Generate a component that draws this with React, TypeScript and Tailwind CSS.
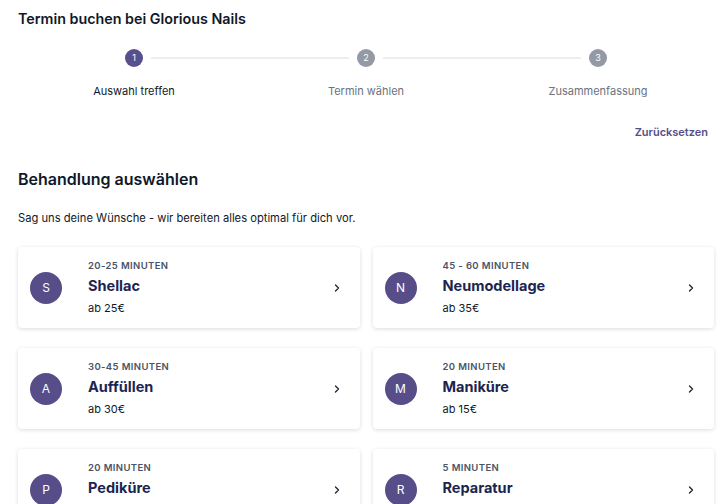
import React from 'react';

const steps = [
    { n: 1, label: 'Auswahl treffen', active: true },
    { n: 2, label: 'Termin wählen', active: false },
    { n: 3, label: 'Zusammenfassung', active: false },
];

const services = [
    { letter: 'S', duration: '20-25 Minuten', name: 'Shellac', price: 'ab 25€' },
    { letter: 'N', duration: '45 - 60 Minuten', name: 'Neumodellage', price: 'ab 35€' },
    { letter: 'A', duration: '30-45 Minuten', name: 'Auffüllen', price: 'ab 30€' },
    { letter: 'M', duration: '20 Minuten', name: 'Maniküre', price: 'ab 15€' },
    { letter: 'P', duration: '20 Minuten', name: 'Pediküre', price: 'ab 20€' },
    { letter: 'R', duration: '5 Minuten', name: 'Reparatur', price: 'ab 5€' },
];

const Chevron = () => (
    <svg width="10" height="10" viewBox="0 0 10 10" fill="none" stroke="#1f2937" strokeWidth="1.4" strokeLinecap="round" strokeLinejoin="round">
        <path d="M3.5 2 L6.5 5 L3.5 8" />
    </svg>
);

const Stepper = () => (
    <div className="grid grid-cols-3 mt-[21px]">
        {steps.map((s, i) => (
            <div key={s.n} className="relative flex flex-col items-center">
                {i < steps.length - 1 && (
                    <div className="absolute top-[8px] left-[calc(50%+17px)] w-[calc(100%-34px)] h-[2px] bg-[#eceef1]"></div>
                )}
                <div className={`w-[18px] h-[18px] rounded-full flex items-center justify-center text-white text-[9px] ${s.active ? 'bg-[#584f8e]' : 'bg-[#939aa6]'}`}>
                    {s.n}
                </div>
                <p className={`mt-[17px] text-[11px] leading-[14px] ${s.active ? 'text-[#111827]' : 'text-[#6b7280]'}`}>{s.label}</p>
            </div>
        ))}
    </div>
);

const ServiceCard = ({ letter, duration, name, price }: any) => (
    <div className="bg-white rounded-[4px] shadow-[0_1px_4px_rgba(0,0,0,0.14)] h-[81px] flex items-center pl-[12px] pr-[18px]">
        <div className="w-[32px] h-[32px] rounded-full bg-[#574e89] flex items-center justify-center text-white text-[12px] shrink-0">
            {letter}
        </div>
        <div className="ml-[26px] flex-1 flex flex-col">
            <p className="text-[9.5px] font-semibold uppercase tracking-[0.04em] text-[#4a5468] leading-[12px]">{duration}</p>
            <p className="mt-[5px] text-[14.5px] font-bold text-[#1b2550] leading-[18px]">{name}</p>
            <p className="mt-[6px] text-[11px] text-[#111827] leading-[14px]">{price}</p>
        </div>
        <Chevron />
    </div>
);

export default function App() {
    return (
        <div className="w-[727px] h-[504px] overflow-hidden bg-white pl-[18px] pr-[13px] pt-[10px]" style={{ fontFamily: 'Inter, "Noto Sans", sans-serif' }}>
            <h1 className="text-[14.3px] font-semibold text-[#111827] leading-[18px]">Termin buchen bei Glorious Nails</h1>
            <Stepper />
            <div className="flex justify-end mt-[27px] pr-[6px]">
                <button className="text-[11px] font-semibold text-[#574e89] leading-[14px]">Zurücksetzen</button>
            </div>
            <h2 className="mt-[30px] text-[16px] font-semibold text-[#111827] leading-[20px]">Behandlung auswählen</h2>
            <p className="mt-[22px] text-[11.2px] text-[#111827] leading-[14px]">Sag uns deine Wünsche - wir bereiten alles optimal für dich vor.</p>
            <div className="mt-[22px] grid grid-cols-2 gap-x-[13px] gap-y-[20px]">
                {services.map((s) => (
                    <ServiceCard key={s.name} {...s} />
                ))}
            </div>
        </div>
    );
}
